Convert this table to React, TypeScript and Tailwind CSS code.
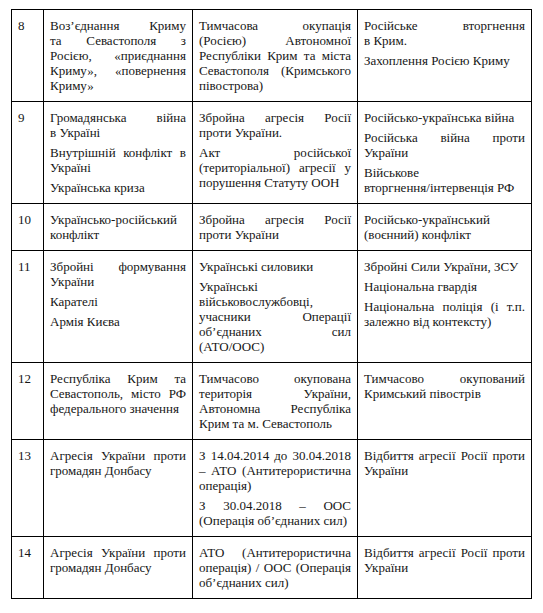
import React from "react";

type Cell = string[][];

const rows: { num: string; cells: [Cell, Cell, Cell] }[] = [
    {
        num: "8",
        cells: [
            [["Воз’єднання Криму", "та Севастополя з", "Росією, «приєднання", "Криму», «повернення", "Криму»"]],
            [["Тимчасова окупація", "(Росією) Автономної", "Республіки Крим та міста", "Севастополя (Кримського", "півострова)"]],
            [["Російське вторгнення", "в Крим."], ["Захоплення Росією Криму"]],
        ],
    },
    {
        num: "9",
        cells: [
            [["Громадянська війна", "в Україні"], ["Внутрішній конфлікт в", "Україні"], ["Українська криза"]],
            [["Збройна агресія Росії", "проти України."], ["Акт російської", "(територіальної) агресії у", "порушення Статуту ООН"]],
            [["Російсько-українська війна"], ["Російська війна проти", "України"], ["Військове", "вторгнення/інтервенція РФ"]],
        ],
    },
    {
        num: "10",
        cells: [
            [["Українсько-російський", "конфлікт"]],
            [["Збройна агресія Росії", "проти України"]],
            [["Російсько-український", "(воєнний) конфлікт"]],
        ],
    },
    {
        num: "11",
        cells: [
            [["Збройні формування", "України"], ["Карателі"], ["Армія Києва"]],
            [["Українські силовики"], ["Українські", "військовослужбовці,", "учасники Операції", "об’єднаних сил", "(АТО/ООС)"]],
            [["Збройні Сили України, ЗСУ"], ["Національна гвардія"], ["Національна поліція (і т.п.", "залежно від контексту)"]],
        ],
    },
    {
        num: "12",
        cells: [
            [["Республіка Крим та", "Севастополь, місто РФ", "федерального значення"]],
            [["Тимчасово окупована", "територія України,", "Автономна Республіка", "Крим та м. Севастополь"]],
            [["Тимчасово окупований", "Кримський півострів"]],
        ],
    },
    {
        num: "13",
        cells: [
            [["Агресія України проти", "громадян Донбасу"]],
            [["З 14.04.2014 до 30.04.2018", "– АТО (Антитерористична", "операція)"], ["З 30.04.2018 – ООС", "(Операція об’єднаних сил)"]],
            [["Відбиття агресії Росії проти", "України"]],
        ],
    },
    {
        num: "14",
        cells: [
            [["Агресія України проти", "громадян Донбасу"]],
            [["АТО (Антитерористична", "операція) / ООС (Операція", "об’єднаних сил)"]],
            [["Відбиття агресії Росії проти", "України"]],
        ],
    },
];

const cellClass =
    "border border-black align-top px-[6px] pt-[8px] pb-[8px] overflow-hidden [font-family:Liberation_Serif,Times_New_Roman,serif] text-[13px] leading-[15px] text-[#161616]";

const CellText = ({ paras }: { paras: Cell }) => (
    <div className="flex flex-col gap-[5px]">
        {paras.map((lines, i) => (
            <p key={i}>
                {lines.map((line, j) => (
                    <span
                        key={j}
                        className={
                            j < lines.length - 1
                                ? "block whitespace-nowrap text-justify [text-align-last:justify]"
                                : "block whitespace-nowrap text-left"
                        }
                    >
                        {line}
                    </span>
                ))}
            </p>
        ))}
    </div>
);

export default function App() {
    return (
        <div className="bg-white w-[543px] h-[613px] pt-[9px] pl-[11px] font-serif">
            <table className="table-fixed border-collapse w-[520px]">
                <colgroup>
                    <col className="w-[32px]" />
                    <col className="w-[149px]" />
                    <col className="w-[165px]" />
                    <col className="w-[174px]" />
                </colgroup>
                <tbody>
                    {rows.map((row) => (
                        <tr key={row.num}>
                            <td className={cellClass}>{row.num}</td>
                            {row.cells.map((cell, k) => (
                                <td key={k} className={cellClass}>
                                    <CellText paras={cell} />
                                </td>
                            ))}
                        </tr>
                    ))}
                </tbody>
            </table>
        </div>
    );
}
